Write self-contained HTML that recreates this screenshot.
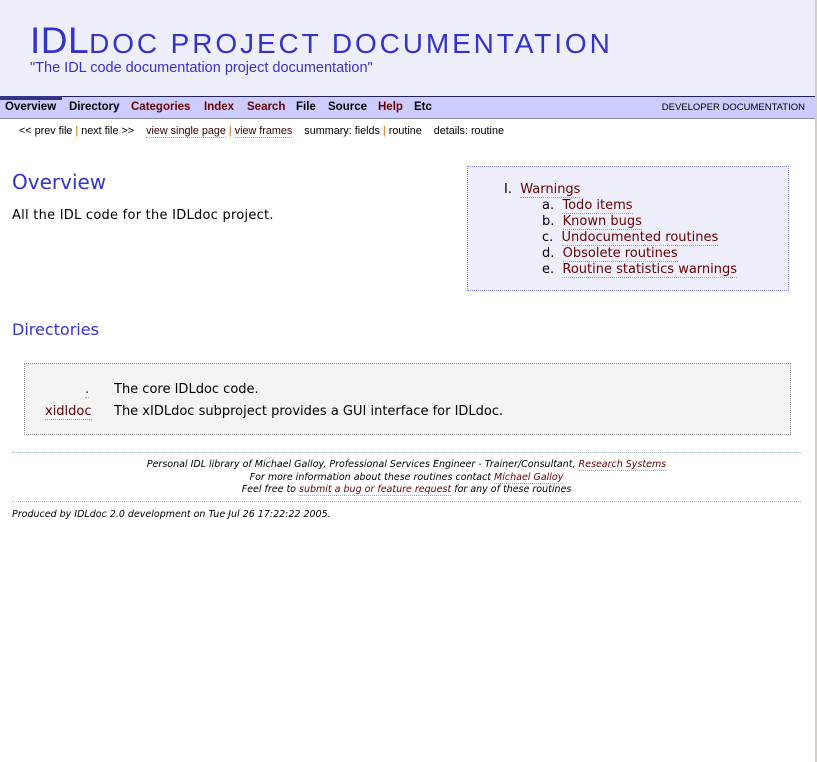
<!DOCTYPE html>
<html><head><meta charset="utf-8"><style>
*{margin:0;padding:0;box-sizing:border-box}
body{width:817px;height:762px;background:#fff;position:relative;overflow:hidden;font-family:"DejaVu Sans",Verdana,sans-serif;color:#000}
.edge{position:absolute;right:0;top:0;width:2px;height:762px;background:#d4d0c8}
.hdr{position:absolute;left:0;top:0;width:815px;height:96px;background:#efeffb}
.title{position:absolute;left:30px;top:20px;font-family:"Liberation Sans",Arial,sans-serif;color:#3333cc;font-size:28px;letter-spacing:2.9px;white-space:nowrap}
.title b{font-weight:normal;font-size:37px;letter-spacing:0.5px}
.sub{position:absolute;left:30px;top:60px;font-family:"Liberation Sans",Arial,sans-serif;color:#3333cc;font-size:14.5px;white-space:nowrap}
.nav{position:absolute;left:0;top:96px;width:815px;height:23px;background:#ccccff;border-top:1px solid #22225a;border-bottom:1px solid #8888aa}
.tab{position:absolute;left:0;top:-1px;width:62px;height:4px;background:#33338a}
.nav span{position:absolute;top:4px;font-family:"Liberation Sans",Arial,sans-serif;font-weight:bold;font-size:11.5px;color:#000;white-space:nowrap}
.nav .r{color:#660000}
.dev{position:absolute;right:10px;top:5px;font-family:"Liberation Sans",Arial,sans-serif;font-size:9.5px;white-space:nowrap}
.sub2{position:absolute;left:19px;top:125px;font-family:"Liberation Sans",Arial,sans-serif;font-size:10.8px;white-space:nowrap;color:#000}
.sub2 u{text-decoration:none;border-bottom:1px dotted #9999ee;color:#330000}
.sub2 i{font-style:normal;color:#cc6600}
h1{position:absolute;left:12px;top:170px;font-weight:normal;font-size:20px;color:#3333cc}
.p1{position:absolute;left:12px;top:208px;font-size:13px;letter-spacing:0.25px}
.toc{position:absolute;left:467px;top:166px;width:322px;height:125px;background:#efeffb;border:1px dotted #8888ee;font-size:13px;line-height:16px}
.toc div{position:absolute;white-space:nowrap}
a{color:#660000;text-decoration:none;border-bottom:1px dotted #9999ee}
h2{position:absolute;left:12px;top:320px;font-weight:normal;font-size:16px;color:#3333cc}
.dir{position:absolute;left:24px;top:363px;width:767px;height:72px;background:#f4f4f4;border:1px dotted #999;font-size:13px}
.dir div{position:absolute;white-space:nowrap}
.hr{position:absolute;left:12px;width:789px;border-top:1px dotted #9fb4d8}
.foot{position:absolute;left:12px;width:789px;text-align:center;font-style:italic;font-size:9.5px;line-height:12.5px;top:459px}
.prod{position:absolute;left:12px;top:509px;font-style:italic;font-size:9.5px}
</style></head><body>
<div class="hdr"><div class="title"><b>IDL</b>DOC PROJECT DOCUMENTATION</div><div class="sub">"The IDL code documentation project documentation"</div></div>
<div class="nav"><div class="tab"></div>
<span style="left:5px">Overview</span><span style="left:69px">Directory</span><span class="r" style="left:131px">Categories</span><span class="r" style="left:204px">Index</span><span class="r" style="left:247px">Search</span><span style="left:296px">File</span><span style="left:328px">Source</span><span class="r" style="left:378px">Help</span><span style="left:414px">Etc</span>
<div class="dev">DEVELOPER DOCUMENTATION</div></div>
<div class="sub2">&lt;&lt; prev file <i>|</i> next file &gt;&gt; &nbsp; &nbsp;<u>view single page</u> <i>|</i> <u>view frames</u> &nbsp; &nbsp;summary: fields <i>|</i> routine &nbsp; &nbsp;details: routine</div>
<h1>Overview</h1>
<div class="p1">All the IDL code for the IDLdoc project.</div>
<div class="toc">
<div style="left:36px;top:15px">I.&nbsp; <a>Warnings</a></div>
<div style="left:74px;top:31px">a.&nbsp; <a>Todo items</a></div>
<div style="left:74px;top:47px">b.&nbsp; <a>Known bugs</a></div>
<div style="left:74px;top:63px">c.&nbsp; <a>Undocumented routines</a></div>
<div style="left:74px;top:79px">d.&nbsp; <a>Obsolete routines</a></div>
<div style="left:74px;top:95px">e.&nbsp; <a>Routine statistics warnings</a></div>
</div>
<h2>Directories</h2>
<div class="dir">
<div style="left:60px;top:18px"><a>.</a></div>
<div style="left:89px;top:18px">The core IDLdoc code.</div>
<div style="left:20px;top:40px"><a>xidldoc</a></div>
<div style="left:89px;top:40px">The xIDLdoc subproject provides a GUI interface for IDLdoc.</div>
</div>
<div class="hr" style="top:452px"></div>
<div class="foot">Personal IDL library of Michael Galloy, Professional Services Engineer - Trainer/Consultant, <a>Research Systems</a><br>For more information about these routines contact <a>Michael Galloy</a><br>Feel free to <a>submit a bug or feature request</a> for any of these routines</div>
<div class="hr" style="top:501px"></div>
<div class="prod">Produced by IDLdoc 2.0 development on Tue Jul 26 17:22:22 2005.</div>
<div class="edge"></div>
</body></html>
